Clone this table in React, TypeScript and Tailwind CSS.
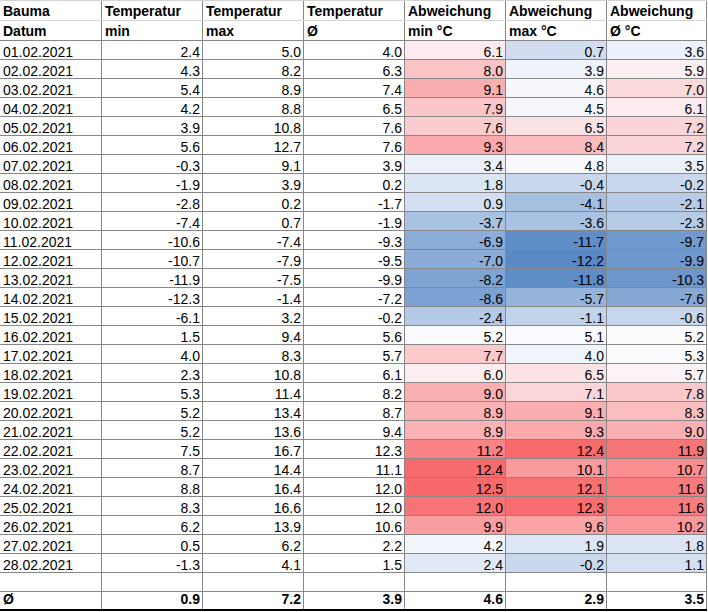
import React from "react";

type Row = [string, number, number, number, number, number, number];

const rows: Row[] = [
  ["01.02.2021", 2.4, 5.0, 4.0, 6.1, 0.7, 3.6],
  ["02.02.2021", 4.3, 8.2, 6.3, 8.0, 3.9, 5.9],
  ["03.02.2021", 5.4, 8.9, 7.4, 9.1, 4.6, 7.0],
  ["04.02.2021", 4.2, 8.8, 6.5, 7.9, 4.5, 6.1],
  ["05.02.2021", 3.9, 10.8, 7.6, 7.6, 6.5, 7.2],
  ["06.02.2021", 5.6, 12.7, 7.6, 9.3, 8.4, 7.2],
  ["07.02.2021", -0.3, 9.1, 3.9, 3.4, 4.8, 3.5],
  ["08.02.2021", -1.9, 3.9, 0.2, 1.8, -0.4, -0.2],
  ["09.02.2021", -2.8, 0.2, -1.7, 0.9, -4.1, -2.1],
  ["10.02.2021", -7.4, 0.7, -1.9, -3.7, -3.6, -2.3],
  ["11.02.2021", -10.6, -7.4, -9.3, -6.9, -11.7, -9.7],
  ["12.02.2021", -10.7, -7.9, -9.5, -7.0, -12.2, -9.9],
  ["13.02.2021", -11.9, -7.5, -9.9, -8.2, -11.8, -10.3],
  ["14.02.2021", -12.3, -1.4, -7.2, -8.6, -5.7, -7.6],
  ["15.02.2021", -6.1, 3.2, -0.2, -2.4, -1.1, -0.6],
  ["16.02.2021", 1.5, 9.4, 5.6, 5.2, 5.1, 5.2],
  ["17.02.2021", 4.0, 8.3, 5.7, 7.7, 4.0, 5.3],
  ["18.02.2021", 2.3, 10.8, 6.1, 6.0, 6.5, 5.7],
  ["19.02.2021", 5.3, 11.4, 8.2, 9.0, 7.1, 7.8],
  ["20.02.2021", 5.2, 13.4, 8.7, 8.9, 9.1, 8.3],
  ["21.02.2021", 5.2, 13.6, 9.4, 8.9, 9.3, 9.0],
  ["22.02.2021", 7.5, 16.7, 12.3, 11.2, 12.4, 11.9],
  ["23.02.2021", 8.7, 14.4, 11.1, 12.4, 10.1, 10.7],
  ["24.02.2021", 8.8, 16.4, 12.0, 12.5, 12.1, 11.6],
  ["25.02.2021", 8.3, 16.6, 12.0, 12.0, 12.3, 11.6],
  ["26.02.2021", 6.2, 13.9, 10.6, 9.9, 9.6, 10.2],
  ["27.02.2021", 0.5, 6.2, 2.2, 4.2, 1.9, 1.8],
  ["28.02.2021", -1.3, 4.1, 1.5, 2.4, -0.2, 1.1],
];

const avg = [0.9, 7.2, 3.9, 4.6, 2.9, 3.5];

const devs = rows.flatMap((r) => [r[4], r[5], r[6]]).sort((a, b) => a - b);
const minV = devs[0];
const maxV = devs[devs.length - 1];
const rank = (devs.length - 1) * 0.5;
const lo = Math.floor(rank);
const midV = devs[lo] + (devs[Math.min(lo + 1, devs.length - 1)] - devs[lo]) * (rank - lo);

const BLUE = [90, 138, 198];
const WHITE = [252, 252, 255];
const RED = [248, 105, 107];

function scaleColor(v: number): string {
  let a: number[], b: number[], t: number;
  if (v <= midV) {
    a = BLUE;
    b = WHITE;
    t = (v - minV) / (midV - minV);
  } else {
    a = WHITE;
    b = RED;
    t = (v - midV) / (maxV - midV);
  }
  const c = a.map((x, i) => Math.round(x + (b[i] - x) * t));
  return `rgb(${c[0]}, ${c[1]}, ${c[2]})`;
}

const GRID = "grid grid-cols-[102px_101px_101px_101px_101px_101px_100px]";
const CELL = "border-r border-[#878787] flex items-end overflow-hidden whitespace-nowrap leading-[14px]";

const head1 = ["Bauma", "Temperatur", "Temperatur", "Temperatur", "Abweichung", "Abweichung", "Abweichung"];
const head2 = ["Datum", "min", "max", "Ø", "min °C", "max °C", "Ø °C"];

export default function App() {
  return (
    <div className="w-[708px] h-[612px] bg-white text-black text-[14px] font-['Liberation_Sans',Arial,sans-serif]">
      <div className="w-[707px]">
        <div className={`${GRID} h-[21px] border-t border-b border-[#d4d4d4]`}>
          {head1.map((h, i) => (
            <div key={i} className={`${CELL} pl-[3px] pb-[2px] font-bold`}>
              {h}
            </div>
          ))}
        </div>
        <div className={`${GRID} h-[20px] border-b border-[#878787]`}>
          {head2.map((h, i) => (
            <div key={i} className={`${CELL} pl-[3px] pb-[2px] font-bold`}>
              {h}
            </div>
          ))}
        </div>
        {rows.map((r) => (
          <div key={r[0]} className={`${GRID} h-[19px] border-b border-[#878787]`}>
            <div className={`${CELL} pl-[3px]`}>{r[0]}</div>
            {[r[1], r[2], r[3]].map((v, i) => (
              <div key={i} className={`${CELL} justify-end pr-[2px]`}>
                {v.toFixed(1)}
              </div>
            ))}
            {[r[4], r[5], r[6]].map((v, i) => (
              <div
                key={i + 3}
                className={`${CELL} justify-end pr-[2px]`}
                style={{ backgroundColor: scaleColor(v) }}
              >
                {v.toFixed(1)}
              </div>
            ))}
          </div>
        ))}
        <div className={`${GRID} h-[19px] border-b border-[#878787]`}>
          {Array.from({ length: 7 }).map((_, i) => (
            <div key={i} className={CELL} />
          ))}
        </div>
        <div className={`${GRID} h-[19px] border-b-2 border-black`}>
          <div className={`${CELL} pl-[3px] pb-[3px] font-bold`}>Ø</div>
          {avg.map((v, i) => (
            <div key={i} className={`${CELL} justify-end pr-[2px] pb-[3px] font-bold`}>
              {v.toFixed(1)}
            </div>
          ))}
        </div>
      </div>
    </div>
  );
}
